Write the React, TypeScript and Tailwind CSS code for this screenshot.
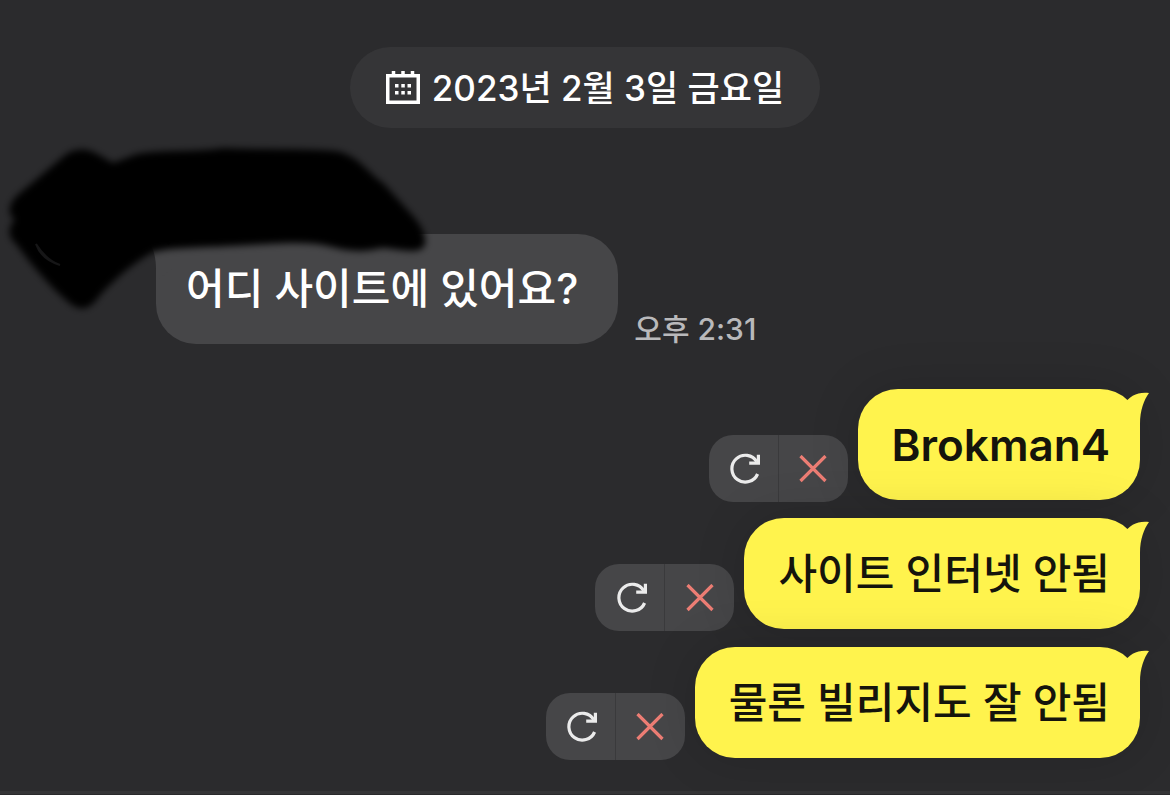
type Message = {
  id: number;
  text: string;
  latin?: boolean;
};

const unsent: Message[] = [
  { id: 1, text: "Brokman4", latin: true },
  { id: 2, text: "사이트 인터넷 안됨" },
  { id: 3, text: "물론 빌리지도 잘 안됨" },
];

function CalendarIcon() {
  return (
    <svg width="34" height="34" viewBox="0 0 34 34" fill="none" aria-hidden="true">
      <rect x="1.75" y="4.75" width="30.5" height="26.5" stroke="currentColor" strokeWidth="3.5" />
      <path d="M7.5 0V6M17 0V6M26.5 0V6" stroke="currentColor" strokeWidth="3.5" />
      <path
        d="M9 14.8h3.5M15.3 14.8h3.5M21.5 14.8h3.5M9 21.8h3.5M15.3 21.8h3.5M21.5 21.8h3.5"
        stroke="currentColor"
        strokeWidth="3.6"
      />
    </svg>
  );
}

function RetryIcon() {
  return (
    <svg width="32" height="32" viewBox="0 0 32 32" fill="none" aria-hidden="true">
      <path
        d="M28.6 21A13.4 13.4 0 1 1 27.8 8.8"
        stroke="currentColor"
        strokeWidth="3.2"
      />
      <path d="M29.4 1.8V10.2H20.2" stroke="currentColor" strokeWidth="3.2" />
    </svg>
  );
}

function CloseIcon() {
  return (
    <svg width="28" height="28" viewBox="0 0 28 28" fill="none" aria-hidden="true">
      <path d="M1.5 1L26.5 26M26.5 1L1.5 26" stroke="currentColor" strokeWidth="3.2" />
    </svg>
  );
}

function BubbleTail({ className }: { className: string }) {
  return (
    <svg
      className={className}
      width="28"
      height="44"
      viewBox="0 0 28 44"
      fill="currentColor"
      aria-hidden="true"
    >
      <path d="M0 15C10 3 16 0 28 1C23 8 19 18 19 32V44L0 30Z" />
    </svg>
  );
}

// Marker strokes painted over the sender's avatar and name
function Redaction() {
  return (
    <svg
      className="absolute top-1 left-0 pointer-events-none"
      width="440"
      height="190"
      viewBox="0 0 440 190"
      aria-hidden="true"
    >
      <defs>
        <filter id="marker" x="-5%" y="-5%" width="110%" height="110%">
          <feGaussianBlur stdDeviation="3.5" />
        </filter>
      </defs>
      <path
        d="M10 76C11 67 20 61 31 52L64 24C75 15 88 16 99 23L113 31L137 22C165 17 190 21 224 16C265 18 300 16 335 19C357 22 368 41 384 52L412 83C423 95 429 109 423 116C415 122 400 117 382 116C363 120 352 120 332 115C304 108 277 112 231 114C197 116 173 115 153 120C135 130 120 142 101 162C91 176 84 180 72 173C53 158 33 135 16 112C7 104 8 96 15 87C10 84 9 80 10 76Z"
        fill="#000"
        filter="url(#marker)"
      />
      <path d="M36 112C39 121 47 129 60 133C48 129 41 120 36 112Z" fill="#161617" stroke="#161617" strokeWidth="2" />
    </svg>
  );
}

function UnsentMessage({ message }: { message: Message }) {
  return (
    <li className="flex items-end justify-end gap-2.5">
      <div className="flex h-[67px] w-[139px] shrink-0 translate-y-0.5 overflow-hidden rounded-[24px] bg-[#464648]">
        <button
          type="button"
          aria-label="다시 보내기"
          className="flex w-[70px] items-center justify-center border-r border-[#3a3a3c] pl-1 text-[#ebebeb]"
        >
          <RetryIcon />
        </button>
        <button
          type="button"
          aria-label="삭제"
          className="flex flex-1 items-center justify-center text-[#ec7d74]"
        >
          <CloseIcon />
        </button>
      </div>
      <div className="relative rounded-[40px] bg-[#fff34d] pt-6 pr-[30px] pb-[23px] pl-[34px] leading-[64px] text-[#15140c] shadow-[0_0_50px_rgba(0,0,0,0.15)]">
        <BubbleTail className="absolute top-[3px] -right-[9px] text-[#fff34d]" />
        <p className={message.latin ? "relative text-[44px] font-semibold" : "relative text-[42px]"}>
          {message.text}
        </p>
      </div>
    </li>
  );
}

export default function App() {
  return (
    <div className="flex min-h-screen flex-col bg-[#2b2b2d] font-['Inter','Noto_Sans_CJK_KR',sans-serif] font-medium">
      <main className="flex-1 pt-[47px] pr-[30px] pb-8">
        <div className="flex justify-center pl-[30px]">
          <button
            type="button"
            className="flex h-[81px] items-center gap-3 rounded-full bg-[#353537] px-9 text-[35px] leading-[48px] text-white"
          >
            <CalendarIcon />
            <time dateTime="2023-02-03">2023년 2월 3일 금요일</time>
          </button>
        </div>

        <section className="relative pt-[106px] pl-[156px]">
          <div className="flex items-end gap-4">
            <div className="relative rounded-[40px] bg-[#464648] py-[23px] pr-10 pl-[30px] text-[42px] leading-[64px] text-white">
              <BubbleTail className="absolute top-[3px] -left-[9px] -scale-x-100 text-[#464648]" />
              <p className="relative">어디 사이트에 있어요?</p>
            </div>
            <time className="text-[30px] leading-[30px] text-[#b9b9bb]">오후 2:31</time>
          </div>
          <Redaction />
        </section>

        <ul className="mt-[45px] flex flex-col gap-[18px]">
          {unsent.map((message) => (
            <UnsentMessage key={message.id} message={message} />
          ))}
        </ul>
      </main>
      <footer className="h-1 border-b border-[#29292b] bg-[#343436]" />
    </div>
  );
}
